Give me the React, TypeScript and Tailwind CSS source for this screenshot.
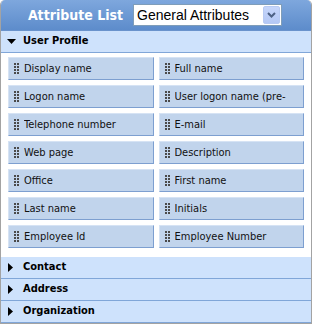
import React from "react";

const left = ["Display name", "Logon name", "Telephone number", "Web page", "Office", "Last name", "Employee Id"];
const right = ["Full name", "User logon name (pre-Windows 2000)", "E-mail", "Description", "First name", "Initials", "Employee Number"];

const COND = '"DejaVu Sans Condensed", "DejaVu Sans", Tahoma, sans-serif';

function Grip() {
  return (
    <svg width="5" height="11" viewBox="0 0 5 11" className="shrink-0">
      {[0, 3, 6, 9].map((y) => (
        <g key={y}>
          <rect x="0" y={y} width="2" height="2" fill="#4a4a4a" />
          <rect x="3" y={y} width="2" height="2" fill="#4a4a4a" />
        </g>
      ))}
    </svg>
  );
}

function Item({ label }: { label: string }) {
  return (
    <div className="h-[23px] flex items-center gap-[5px] pl-[5px] bg-[#c1d4ec] border-t border-l border-t-[#d6e3f4] border-l-[#d6e3f4] border-r border-b border-r-[#7d9fd0] border-b-[#7d9fd0] overflow-hidden text-[11px] text-[#111]">
      <Grip />
      <span className="flex-1 min-w-0 h-[21px] leading-[21px] overflow-hidden break-normal">{label}</span>
    </div>
  );
}

function Section({ label, open }: { label: string; open?: boolean }) {
  return (
    <div className="h-[22px] flex items-center bg-[#cee2fc] border-b border-[#80a6d8] text-[11px] font-bold text-black">
      <div className="w-[22px] pl-[6px] flex items-center">
        {open ? (
          <svg width="9" height="5" viewBox="0 0 9 5"><path d="M0 0H9L4.5 5Z" fill="#000" /></svg>
        ) : (
          <svg width="5" height="9" viewBox="0 0 5 9" className="ml-[1px]"><path d="M0 0V9L5 4.5Z" fill="#000" /></svg>
        )}
      </div>
      <span>{label}</span>
    </div>
  );
}

export default function App() {
  return (
    <div className="w-[312px] h-[324px] bg-white" style={{ fontFamily: COND }}>
      <div className="w-full h-full flex flex-col border-x border-b border-[#a3a3a3] rounded-t-[5px] overflow-hidden">
        <div className="h-[31px] shrink-0 flex items-center bg-gradient-to-b from-[#7ea7dd] to-[#5d8ccb] pl-[10px] pr-[29px] gap-[10px] border-b border-[#6a93cc]">
          <div className="flex-1 text-right whitespace-nowrap text-white font-bold text-[14px]">Attribute List</div>
          <div className="w-[149px] h-[22px] shrink-0 bg-white border border-[#7f9db9] flex items-center pl-[3px] pr-[1px]">
            <span className="flex-1 whitespace-nowrap text-[14px] text-black" style={{ fontFamily: '"Liberation Sans", Arial, sans-serif' }}>General Attributes</span>
            <div className="w-[17px] h-[18px] bg-gradient-to-b from-[#c6d6fb] to-[#b4c8f5] border border-[#b7caf3] rounded-[2px] flex items-center justify-center">
              <svg width="9" height="6" viewBox="0 0 9 6"><path d="M1 1L4.5 4.5L8 1" stroke="#4d6185" strokeWidth="2" fill="none" /></svg>
            </div>
          </div>
        </div>
        <Section label="User Profile" open />
        <div className="flex-1 bg-white px-[7px] pt-[4px] pb-[4px] grid grid-cols-2 gap-x-[5px] gap-y-[5px] content-start">
          {left.map((l, i) => (
            <React.Fragment key={l}>
              <Item label={l} />
              <Item label={right[i]} />
            </React.Fragment>
          ))}
        </div>
        <Section label="Contact" />
        <Section label="Address" />
        <Section label="Organization" />
      </div>
    </div>
  );
}
